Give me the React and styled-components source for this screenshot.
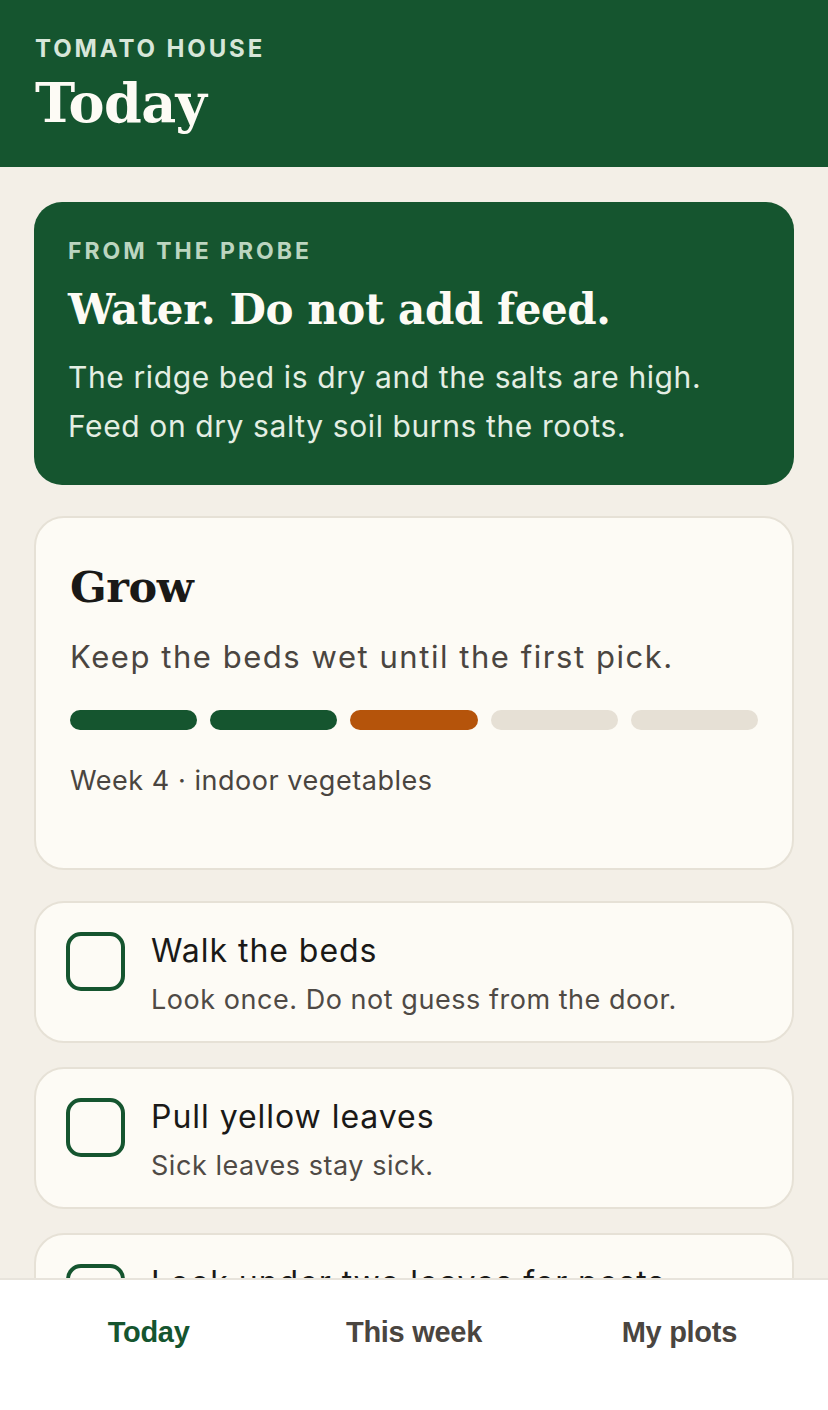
import React from 'react';
import styled, { createGlobalStyle } from 'styled-components';

const GlobalStyle = createGlobalStyle`
  html, body {
    margin: 0;
    padding: 0;
    background: #f3efe7;
  }
  body {
    font-family: Inter, "Noto Sans", sans-serif;
  }
  * {
    box-sizing: border-box;
  }
`;

const Page = styled.div`
  min-height: 1410px;
  background: #f3efe7;
  padding-bottom: 140px;
`;

const Header = styled.header`
  height: 167px;
  background: #15552f;
  padding: 35px 35px 0;
  display: flex;
  flex-direction: column;
  gap: 8px;
`;

const Eyebrow = styled.div`
  font-family: Inter, sans-serif;
  font-weight: 700;
  font-size: ${p => p.size || 24}px;
  letter-spacing: ${p => p.spacing || 0.1}em;
  text-transform: uppercase;
  color: ${p => p.color || '#d7e6d9'};
  line-height: 1.2;
`;

const Title = styled.h1`
  margin: 0;
  font-family: "DejaVu Serif", serif;
  font-weight: 700;
  font-size: ${p => p.size || 54}px;
  line-height: 1.15;
  letter-spacing: -0.01em;
  color: ${p => p.color || '#fdfbf5'};
`;

const Content = styled.main`
  padding: 35px 34px 0;
  display: flex;
  flex-direction: column;
  gap: 31px;
`;

const ProbeCard = styled.section`
  background: #15552f;
  border-radius: 28px;
  padding: 36px 34px 34px;
  display: flex;
  flex-direction: column;
  gap: 10px;
`;

const ProbeTitle = styled(Title)`
  margin: 10px 0 9px;
`;

const ProbeText = styled.p`
  margin: 0;
  font-size: 30px;
  line-height: 49px;
  letter-spacing: 0.02em;
  color: #e4eee3;
`;

const Card = styled.section`
  background: #fdfbf5;
  border: 2px solid #e6e1d6;
  border-radius: 30px;
`;

const GrowCard = styled(Card)`
  display: flex;
  flex-direction: column;
  padding: 45px 34px 71px;
`;

const Lead = styled.p`
  margin: 25px 0 0;
  font-size: 31px;
  line-height: 1.3;
  letter-spacing: 0.05em;
  color: #4a4540;
`;

const Steps = styled.div`
  display: grid;
  grid-template-columns: repeat(5, 1fr);
  gap: 13px;
  margin-top: 32px;
`;

const Step = styled.div`
  height: 20px;
  border-radius: 10px;
  background: ${p => p.state === 'done' ? '#15552f' : p.state === 'now' ? '#b5540b' : '#e6e0d5'};
`;

const Meta = styled.div`
  margin-top: 34px;
  font-size: 27px;
  letter-spacing: 0.02em;
  color: #4a4540;
`;

const Tasks = styled.div`
  display: flex;
  flex-direction: column;
  gap: 24px;
`;

const TaskRow = styled(Card)`
  display: flex;
  align-items: flex-start;
  gap: 26px;
  padding: 29px 30px 24px;
`;

const Check = styled.span`
  flex: none;
  width: 59px;
  height: 59px;
  border: 4px solid #15552f;
  border-radius: 15px;
  background: #fdfbf5;
`;

const TaskText = styled.div`
  display: flex;
  flex-direction: column;
  gap: 12px;
`;

const TaskTitle = styled.div`
  font-size: 32px;
  line-height: 38px;
  letter-spacing: 0.03em;
  color: #1a1917;
`;

const TaskSub = styled.div`
  font-size: 27px;
  line-height: 35px;
  letter-spacing: 0.02em;
  color: #4f4a45;
`;

const TabBar = styled.nav`
  position: fixed;
  left: 0;
  right: 0;
  bottom: 0;
  height: 132px;
  background: #ffffff;
  border-top: 2px solid #e8e4dc;
  display: grid;
  grid-template-columns: repeat(3, 1fr);
  padding: 0 16px 26px;
  align-items: center;
`;

const Tab = styled.div`
  text-align: center;
  font-family: "Liberation Sans", Arial, sans-serif;
  font-weight: 700;
  font-size: 29px;
  letter-spacing: -0.01em;
  color: ${p => p.active ? '#15552f' : '#4a4540'};
`;

const tasks = [
  { title: 'Walk the beds', sub: 'Look once. Do not guess from the door.' },
  { title: 'Pull yellow leaves', sub: 'Sick leaves stay sick.' },
  { title: 'Look under two leaves for pests', sub: 'Turn them over slowly.' },
];

const steps = ['done', 'done', 'now', 'todo', 'todo'];

export default function App() {
  return (
    <Page>
      <GlobalStyle />
      <Header>
        <Eyebrow spacing={0.12}>Tomato House</Eyebrow>
        <Title>Today</Title>
      </Header>

      <Content>
        <ProbeCard>
          <Eyebrow size={23} spacing={0.13} color="#bcd5c0">From the probe</Eyebrow>
          <ProbeTitle as="h2" size={42}>Water. Do not add feed.</ProbeTitle>
          <ProbeText>
            The ridge bed is dry and the salts are high.<br />
            Feed on dry salty soil burns the roots.
          </ProbeText>
        </ProbeCard>

        <GrowCard>
          <Title as="h2" size={43} color="#1a1917">Grow</Title>
          <Lead>Keep the beds wet until the first pick.</Lead>
          <Steps>
            {steps.map((s, i) => <Step key={i} state={s} />)}
          </Steps>
          <Meta>Week 4 · indoor vegetables</Meta>
        </GrowCard>

        <Tasks>
          {tasks.map(t => (
            <TaskRow key={t.title}>
              <Check />
              <TaskText>
                <TaskTitle>{t.title}</TaskTitle>
                <TaskSub>{t.sub}</TaskSub>
              </TaskText>
            </TaskRow>
          ))}
        </Tasks>
      </Content>

      <TabBar>
        <Tab active>Today</Tab>
        <Tab>This week</Tab>
        <Tab>My plots</Tab>
      </TabBar>
    </Page>
  );
}
